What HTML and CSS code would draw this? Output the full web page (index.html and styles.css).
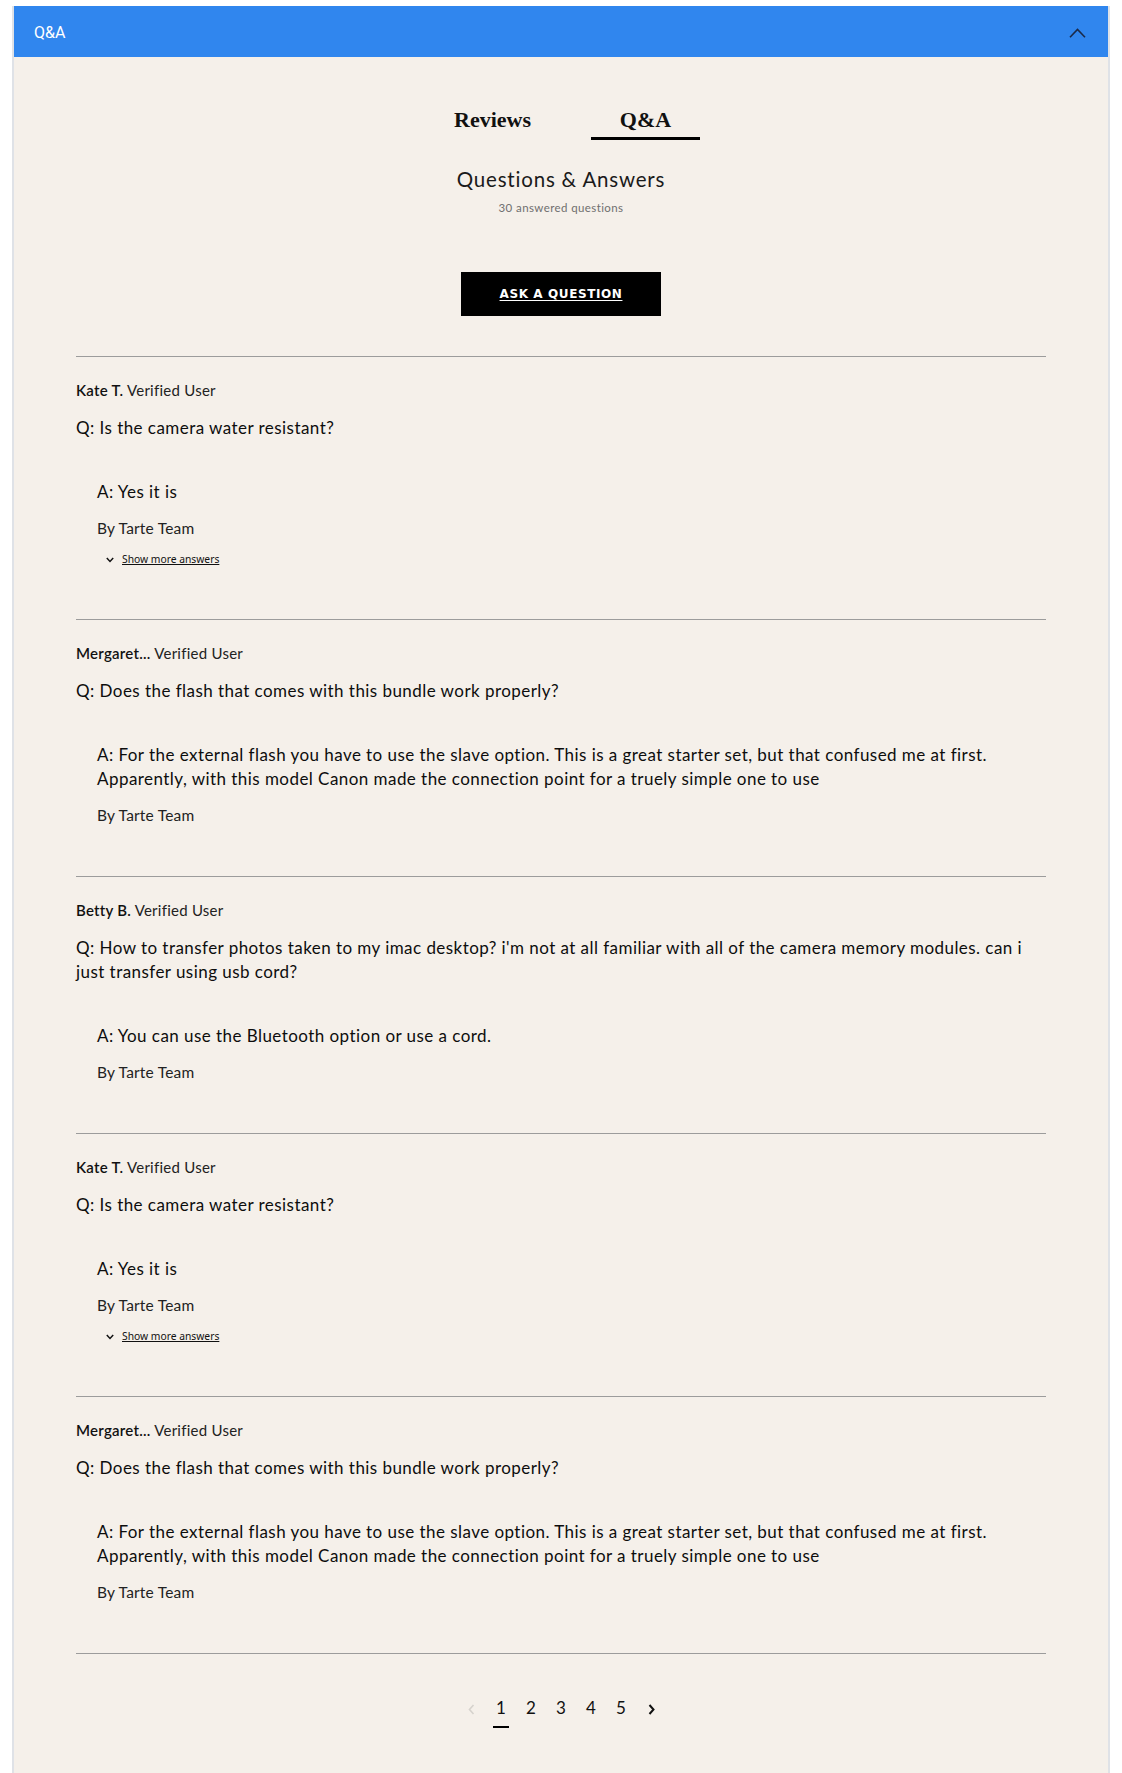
FILE: index.html
```html
<!DOCTYPE html>
<html lang="en">
<head>
<meta charset="utf-8">
<title>Q&amp;A</title>
<link rel="stylesheet" href="styles.css">
</head>
<body>
<div class="panel">
  <header class="panel-head">
    <span class="panel-title">Q&amp;A</span>
    <svg class="panel-toggle" width="17" height="10" viewBox="0 0 17 10" aria-hidden="true"><path d="M1 9.3 L8.5 1.5 L16 9.3" fill="none" stroke="#1b2a48" stroke-width="1.6"/></svg>
  </header>
  <div class="panel-body">
    <nav class="tabs">
      <a class="tab">Reviews</a>
      <a class="tab tab-active">Q&amp;A</a>
    </nav>
    <div class="summary">
      <h2 class="summary-title">Questions &amp; Answers</h2>
      <p class="summary-count">30 answered questions</p>
    </div>
    <div class="ask">
      <a class="ask-btn">ASK A QUESTION</a>
    </div>

    <ul class="qa-list">
      <li class="qa">
        <div class="qa-meta"><span class="qa-name">Kate T.</span> Verified User</div>
        <p class="qa-q">Q: Is the camera water resistant?</p>
        <div class="qa-answer">
          <p class="qa-a">A: Yes it is</p>
          <p class="qa-by">By Tarte Team</p>
          <a class="qa-more"><svg width="8" height="6" viewBox="0 0 8 6" aria-hidden="true"><path d="M0.8 1 L4 4.4 L7.2 1" fill="none" stroke="#111" stroke-width="1.5"/></svg><span>Show more answers</span></a>
        </div>
      </li>
      <li class="qa">
        <div class="qa-meta"><span class="qa-name">Mergaret...</span> Verified User</div>
        <p class="qa-q">Q: Does the flash that comes with this bundle work properly?</p>
        <div class="qa-answer">
          <p class="qa-a">A: For the external flash you have to use the slave option. This is a great starter set, but that confused me at first. Apparently, with this model Canon made the connection point for a truely simple one to use</p>
          <p class="qa-by">By Tarte Team</p>
        </div>
      </li>
      <li class="qa">
        <div class="qa-meta"><span class="qa-name">Betty B.</span> Verified User</div>
        <p class="qa-q">Q: How to transfer photos taken to my imac desktop? i'm not at all familiar with all of the camera memory modules. can i just transfer using usb cord?</p>
        <div class="qa-answer">
          <p class="qa-a">A: You can use the Bluetooth option or use a cord.</p>
          <p class="qa-by">By Tarte Team</p>
        </div>
      </li>
      <li class="qa">
        <div class="qa-meta"><span class="qa-name">Kate T.</span> Verified User</div>
        <p class="qa-q">Q: Is the camera water resistant?</p>
        <div class="qa-answer">
          <p class="qa-a">A: Yes it is</p>
          <p class="qa-by">By Tarte Team</p>
          <a class="qa-more"><svg width="8" height="6" viewBox="0 0 8 6" aria-hidden="true"><path d="M0.8 1 L4 4.4 L7.2 1" fill="none" stroke="#111" stroke-width="1.5"/></svg><span>Show more answers</span></a>
        </div>
      </li>
      <li class="qa">
        <div class="qa-meta"><span class="qa-name">Mergaret...</span> Verified User</div>
        <p class="qa-q">Q: Does the flash that comes with this bundle work properly?</p>
        <div class="qa-answer">
          <p class="qa-a">A: For the external flash you have to use the slave option. This is a great starter set, but that confused me at first. Apparently, with this model Canon made the connection point for a truely simple one to use</p>
          <p class="qa-by">By Tarte Team</p>
        </div>
      </li>
    </ul>

    <nav class="pager">
      <span class="pager-arrow"><svg width="7" height="11" viewBox="0 0 7 11" aria-hidden="true"><path d="M5.5 1 L1.5 5.5 L5.5 10" fill="none" stroke="#d6d2cd" stroke-width="1.6"/></svg></span>
      <span class="pager-num pager-current">1</span>
      <span class="pager-num">2</span>
      <span class="pager-num">3</span>
      <span class="pager-num">4</span>
      <span class="pager-num">5</span>
      <span class="pager-arrow"><svg width="7" height="11" viewBox="0 0 7 11" aria-hidden="true"><path d="M1.5 1 L5.5 5.5 L1.5 10" fill="none" stroke="#111" stroke-width="2"/></svg></span>
    </nav>
  </div>
</div>
</body>
</html>
```

FILE: styles.css
```css
* { box-sizing: border-box; }

html, body {
  margin: 0;
  padding: 0;
  background: #ffffff;
}

body {
  font-family: "Lato", "Noto Sans", sans-serif;
  color: #1b1b1b;
}

.panel {
  margin: 6px 12px 0;
  border-left: 2px solid #dfe2e7;
  border-right: 2px solid #dfe2e7;
  min-height: 1767px;
  display: flex;
  flex-direction: column;
}

.panel-head {
  height: 51px;
  background: #3086ee;
  display: flex;
  align-items: center;
  justify-content: space-between;
  padding: 0 22px 0 20px;
}

.panel-title {
  font-family: "Roboto", "Liberation Sans", sans-serif;
  font-size: 16px;
  color: #ffffff;
  margin-top: 1px;
}

.panel-toggle { display: block; margin-top: 2px; }

.panel-body {
  flex: 1;
  background: #f5f0ea;
  padding: 0 62px;
}

/* Tabs */
.tabs {
  display: flex;
  justify-content: center;
  gap: 44px;
  margin-top: 50px;
  padding-left: 16px;
}

.tab {
  width: 109px;
  text-align: center;
  font-family: "Liberation Serif", "Times New Roman", serif;
  font-weight: bold;
  font-size: 22px;
  line-height: 26px;
  padding-bottom: 4px;
  border-bottom: 3px solid transparent;
  color: #111;
}

.tab-active { border-bottom-color: #000; }

/* Summary */
.summary { text-align: center; }

.summary-title {
  margin: 27px 0 0;
  font-size: 20.5px;
  line-height: 24px;
  font-weight: 400;
  letter-spacing: 0.8px;
  color: #1a1a1a;
}

.summary-count {
  margin: 10px 0 0;
  font-size: 11.5px;
  line-height: 14px;
  letter-spacing: 0.4px;
  color: #6f6f6f;
}

.ask {
  display: flex;
  justify-content: center;
  margin-top: 57px;
}

.ask-btn {
  width: 200px;
  height: 44px;
  background: #000;
  color: #fff;
  display: flex;
  align-items: center;
  justify-content: center;
  font-family: "DejaVu Sans", "Verdana", sans-serif;
  font-weight: bold;
  font-size: 12px;
  letter-spacing: 0.6px;
  text-decoration: underline;
  text-underline-offset: 2px;
}

/* QA list */
.qa-list {
  list-style: none;
  margin: 40px 0 0;
  padding: 0;
  border-bottom: 1px solid #9c9c9c;
}

.qa {
  border-top: 1px solid #9c9c9c;
  padding: 23px 0 51px;
}

.qa-meta {
  font-size: 15px;
  line-height: 20px;
  letter-spacing: 0.25px;
  color: #222;
}

.qa-name { font-weight: 600; color: #111; }

.qa-q {
  margin: 16px 0 0;
  font-size: 17px;
  line-height: 24px;
  letter-spacing: 0.45px;
  color: #0d0d0d;
}

.qa-answer {
  padding-left: 21px;
  margin-top: 40px;
}

.qa-a {
  margin: 0;
  font-size: 17px;
  line-height: 24px;
  letter-spacing: 0.45px;
  color: #0d0d0d;
}

.qa-by {
  margin: 14px 0 0;
  font-size: 15.5px;
  line-height: 20px;
  letter-spacing: 0.2px;
  color: #222;
}

.qa-more {
  display: flex;
  align-items: center;
  gap: 8px;
  margin-top: 13px;
  padding-left: 9px;
  height: 17px;
  font-family: "Noto Sans", "DejaVu Sans", sans-serif;
  font-size: 10.3px;
  color: #111;
}

.qa-more svg { display: block; }

.qa-more span {
  text-decoration: underline;
  line-height: 17px;
}

/* Pager */
.pager {
  display: flex;
  justify-content: center;
  align-items: flex-start;
  margin-top: 42px;
}

.pager-num {
  width: 30px;
  text-align: center;
  font-size: 17px;
  line-height: 24px;
  color: #111;
}

.pager-current {
  position: relative;
}

.pager-current::after {
  content: "";
  position: absolute;
  left: 7px;
  right: 7px;
  top: 30px;
  height: 2px;
  background: #000;
}

.pager-arrow {
  width: 30px;
  height: 24px;
  display: flex;
  align-items: center;
  justify-content: center;
  padding-top: 2px;
}
```
